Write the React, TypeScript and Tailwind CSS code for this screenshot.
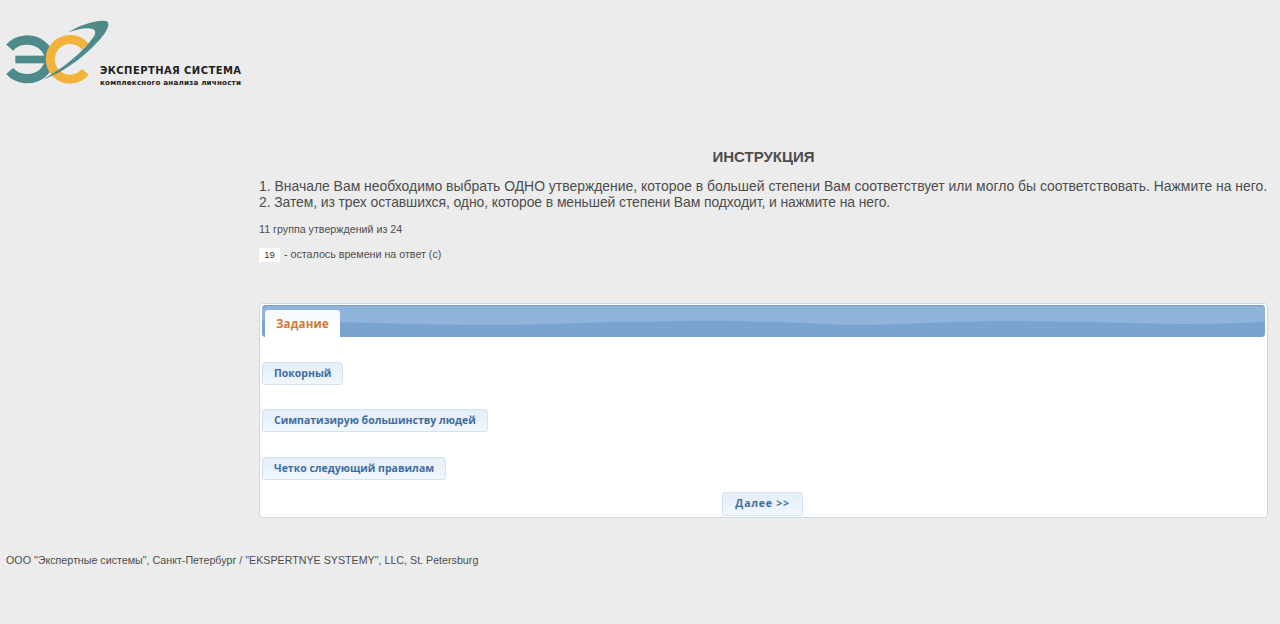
const options = [
  { text: 'Покорный', gap: 'mt-[25px]' },
  { text: 'Симпатизирую большинству людей', gap: 'mt-[24px]' },
  { text: 'Четко следующий правилам', gap: 'mt-[25px]' },
];

function Logo() {
  return (
    <svg width="245" height="80" viewBox="0 0 245 80" className="block">
      <g transform="scale(0.3333)">
        <path d="M29 113 A66 58 0 1 1 29 183" fill="none" stroke="#4f8a8a" strokeWidth="28" />
        <path d="M46 137 H136 V160 H46 Z" fill="#4f8a8a" />
        <path d="M256 110 A59.5 59.5 0 1 0 256 186" fill="none" stroke="#f2b33d" strokeWidth="27" />
        <path
          d="M205 67 C240 45 290 28 318 33 C332 37 325 58 305 82 C270 125 200 185 130 208 C190 175 250 125 280 82 C292 64 285 55 262 55 C245 55 225 60 205 67 Z"
          fill="#4f8a8a"
        />
      </g>
      <text
        x="100"
        y="64"
        textLength="141"
        lengthAdjust="spacing"
        fill="#222"
        className="font-['DejaVu_Sans',sans-serif] text-[10px] font-bold"
      >
        ЭКСПЕРТНАЯ СИСТЕМА
      </text>
      <text
        x="100"
        y="75"
        textLength="141"
        lengthAdjust="spacing"
        fill="#222"
        className="font-['DejaVu_Sans',sans-serif] text-[7.2px] font-bold"
      >
        комплексного анализа личности
      </text>
    </svg>
  );
}

function BlueButton({ text, className }: { text: string; className?: string }) {
  return (
    <button
      className={`block h-[23px] rounded-[3px] border border-[#d3e2f1] bg-gradient-to-b from-[#e3eef9] to-[#f1f7fd] px-[11px] font-['Open_Sans',sans-serif] text-[10.5px] font-bold whitespace-nowrap text-[#3f6d9e] ${className ?? ''}`}
    >
      {text}
    </button>
  );
}

export default function App() {
  return (
    <div className="min-h-screen bg-[#ececec] font-['Liberation_Sans',Arial,sans-serif] text-[#4d4d4d]">
      <div className="h-[148px] pt-[10px]">
        <Logo />
      </div>

      <div className="ml-[259px] w-[1012px]">
        <h1 className="w-[1009px] text-center text-[15px] leading-[18px] font-bold">ИНСТРУКЦИЯ</h1>
        <p className="mt-[12px] text-[13.93px] leading-[16px] whitespace-nowrap">
          1. Вначале Вам необходимо выбрать ОДНО утверждение, которое в большей степени Вам соответствует или могло бы соответствовать. Нажмите на него.
        </p>
        <p className="text-[13.93px] leading-[16px] tracking-[-0.085px] whitespace-nowrap">
          2. Затем, из трех оставшихся, одно, которое в меньшей степени Вам подходит, и нажмите на него.
        </p>
        <p className="mt-[13px] text-[10.7px] leading-[13px]">11 группа утверждений из 24</p>
        <div className="mt-[12px] flex items-center text-[10.7px] leading-[14px]">
          <span className="flex h-[14px] w-[21px] items-center justify-center bg-white text-[9.5px] text-[#333]">19</span>
          <span className="ml-[4px] -translate-y-[1px]">- осталось времени на ответ (с)</span>
        </div>

        <div className="mt-[41px] h-[215px] w-[1009px] rounded-[4px] border border-[#cbd8e6] bg-white p-[1px]">
          <div className="relative ml-[1px] h-[32px] w-[1003px] overflow-hidden rounded-[4px] bg-[#8fb3da] shadow-[inset_0_1px_0_#7f9db5]">
            <svg className="absolute inset-0 h-full w-full" viewBox="0 0 1003 32" preserveAspectRatio="none">
              <path
                d="M0 16 C40 15 60 17 78 17 C140 19 190 20 238 20 C290 19 340 17 418 16 C470 15 520 17 588 20 C640 20 690 16 738 16 C800 16 860 18 918 19 C950 19 980 18 1003 17 V32 H0 Z"
                fill="#7aa4cf"
              />
            </svg>
            <div className="absolute bottom-0 left-[3px] flex h-[27px] w-[75px] items-center justify-center rounded-t-[3px] bg-gradient-to-b from-[#f6f9fc] to-white font-['Open_Sans',sans-serif] text-[11.5px] font-bold tracking-[0.2px] text-[#cf7b35]">
              Задание
            </div>
          </div>
          <div className="pl-[1px]">
            {options.map((o) => (
              <BlueButton key={o.text} text={o.text} className={o.gap} />
            ))}
            <BlueButton text="Далее >>" className="mt-[12px] ml-[460px] h-[24px] w-[81px] tracking-[0.75px]" />
          </div>
        </div>
      </div>

      <p className="mt-[36px] ml-[6px] text-[10.7px] leading-[13px]">
        ООО "Экспертные системы", Санкт-Петербург / "EKSPERTNYE SYSTEMY", LLC, St. Petersburg
      </p>
    </div>
  );
}
